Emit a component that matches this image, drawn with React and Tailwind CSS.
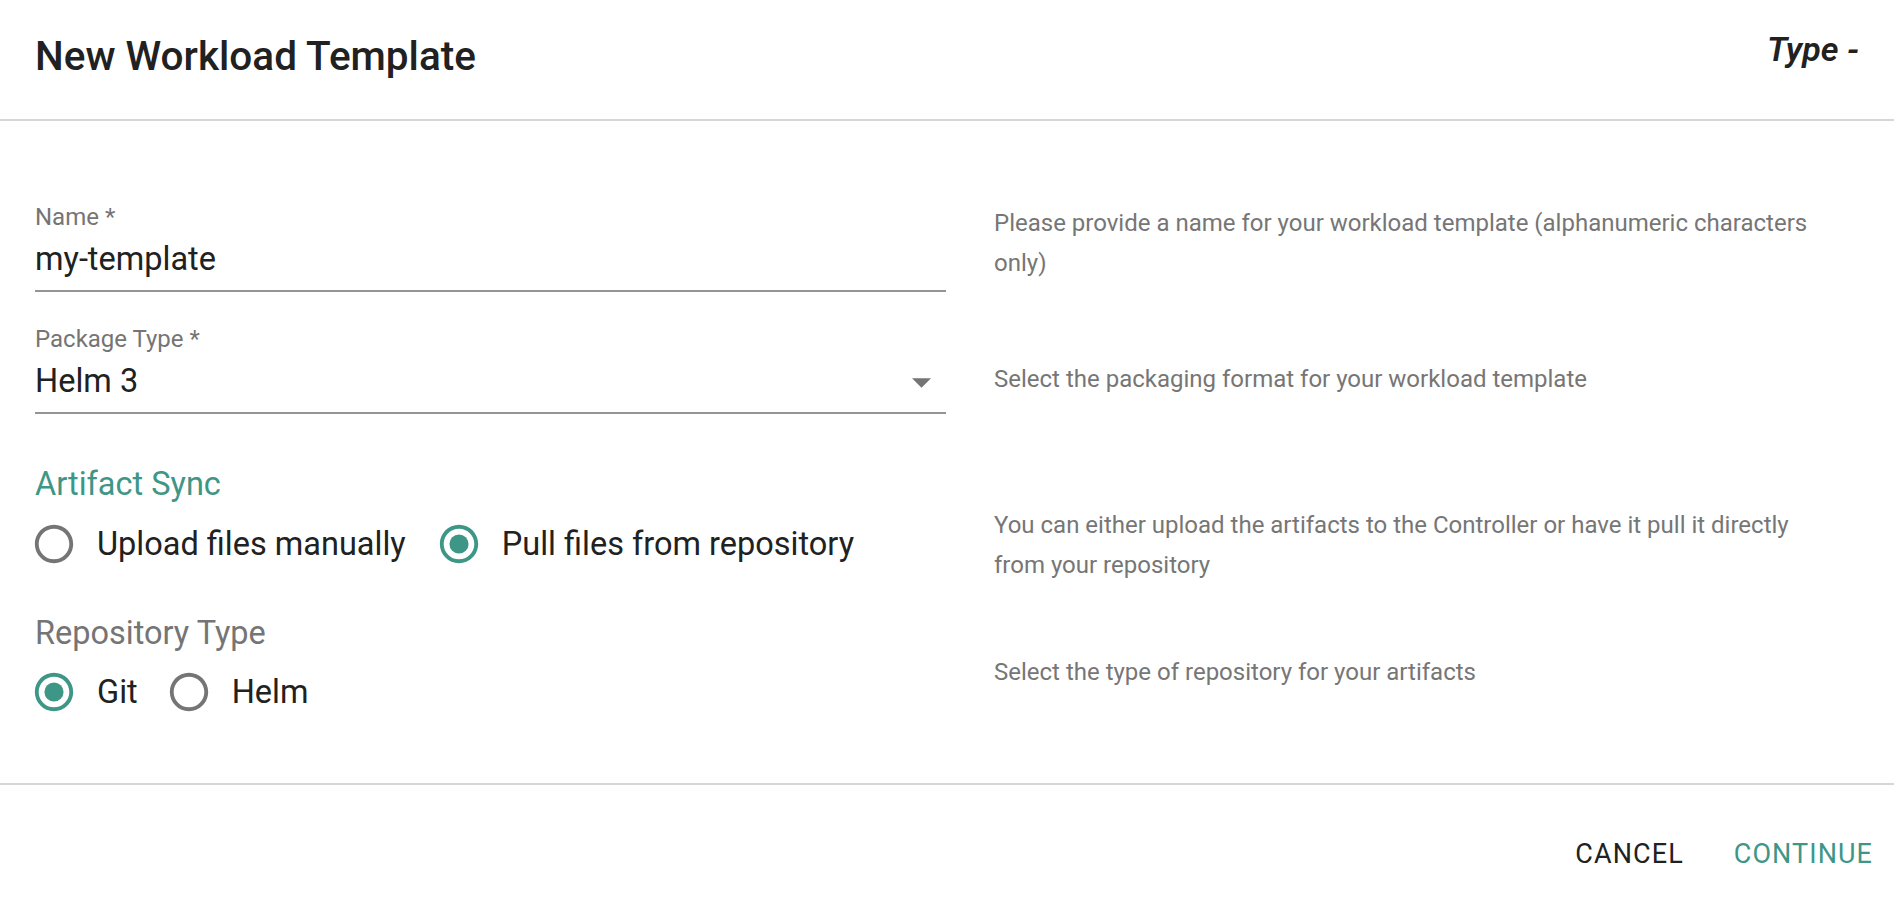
import React from "react";

const TEAL = "#3e9687";

function Radio({ checked }) {
  return (
    <svg viewBox="0 0 24 24" className="w-[46px] h-[46px] shrink-0" aria-hidden="true">
      {checked ? (
        <>
          <path
            fill={TEAL}
            d="M12 2C6.48 2 2 6.48 2 12s4.48 10 10 10 10-4.48 10-10S17.52 2 12 2zm0 18c-4.42 0-8-3.58-8-8s3.58-8 8-8 8 3.58 8 8-3.58 8-8 8z"
          />
          <circle cx="12" cy="12" r="5" fill={TEAL} />
        </>
      ) : (
        <path
          fill="#757575"
          d="M12 2C6.48 2 2 6.48 2 12s4.48 10 10 10 10-4.48 10-10S17.52 2 12 2zm0 18c-4.42 0-8-3.58-8-8s3.58-8 8-8 8 3.58 8 8-3.58 8-8 8z"
        />
      )}
    </svg>
  );
}

function Help({ children, className = "" }) {
  return (
    <div className={"pl-[24px] w-[854px] text-[24px] leading-[40px] text-[#767676] " + className}>
      {children}
    </div>
  );
}

export default function App() {
  return (
    <div
      className="w-[1894px] h-[900px] bg-white flex flex-col"
      style={{ fontFamily: "Roboto, 'Noto Sans', sans-serif" }}
    >
      <header className="h-[121px] shrink-0 border-b-2 border-[#d6d6d6] flex items-center justify-between px-[35px]">
        <h1 className="text-[40.5px] font-medium text-[#212121] -mt-[6px]">New Workload Template</h1>
        <div className="text-[34px] font-semibold italic text-[#212121] -mt-[21px]">Type -</div>
      </header>

      <main className="flex-1 px-[35px] pt-[82px]">
        {/* Name */}
        <div className="grid grid-cols-[935px_1fr] items-start">
          <div className="pr-[24px]">
            <div className="text-[24px] leading-[28px] text-[#757575]">Name *</div>
            <div className="pt-[8px] pb-[11px] text-[32.5px] leading-[40px] text-[#212121] border-b-2 border-[#949494]">
              my-template
            </div>
          </div>
          <Help>
            Please provide a name for your workload template (alphanumeric characters only)
          </Help>
        </div>

        {/* Package Type */}
        <div className="grid grid-cols-[935px_1fr] items-start mt-[33px]">
          <div className="pr-[24px]">
            <div className="text-[24px] leading-[28px] text-[#757575]">Package Type *</div>
            <div className="pt-[8px] pb-[11px] text-[32.5px] leading-[40px] text-[#212121] border-b-2 border-[#949494] flex items-center justify-between">
              <span>Helm 3</span>
              <svg viewBox="0 0 10 5" className="w-[19px] h-[10px] mr-[15px] mt-[3px]" aria-hidden="true">
                <path d="M0 0l5 5 5-5z" fill="#757575" />
              </svg>
            </div>
          </div>
          <Help className="pt-[34px]">Select the packaging format for your workload template</Help>
        </div>

        {/* Artifact Sync */}
        <div className="grid grid-cols-[935px_1fr] items-start mt-[52px]">
          <div className="pr-[24px]">
            <div className="text-[32.5px] leading-[36px]" style={{ color: TEAL }}>Artifact Sync</div>
            <div className="mt-[18px] h-[48px] flex items-center -ml-[4px] text-[32.5px] text-[#212121]">
              <Radio checked={false} />
              <span className="ml-[20px]">Upload files manually</span>
              <span className="ml-[30px]"><Radio checked /></span>
              <span className="ml-[20px]">Pull files from repository</span>
            </div>
          </div>
          <Help className="pt-[39px]">
            You can either upload the artifacts to the Controller or have it pull it directly from your repository
          </Help>
        </div>

        {/* Repository Type */}
        <div className="grid grid-cols-[935px_1fr] items-start mt-[30px]">
          <div className="pr-[24px]">
            <div className="text-[32.5px] leading-[36px] text-[#757575]">Repository Type</div>
            <div className="mt-[17px] h-[48px] flex items-center -ml-[4px] text-[32.5px] text-[#212121]">
              <Radio checked />
              <span className="ml-[20px]">Git</span>
              <span className="ml-[28px]"><Radio checked={false} /></span>
              <span className="ml-[20px]">Helm</span>
            </div>
          </div>
          <Help className="pt-[37px]">Select the type of repository for your artifacts</Help>
        </div>
      </main>

      <footer className="h-[117px] shrink-0 border-t-2 border-[#d6d6d6] flex items-center justify-end pr-[21px] pt-[24px] gap-[50px] text-[27px] tracking-[0.04em]">
        <button className="text-[#212121] uppercase">Cancel</button>
        <button className="uppercase" style={{ color: TEAL }}>Continue</button>
      </footer>
    </div>
  );
}
